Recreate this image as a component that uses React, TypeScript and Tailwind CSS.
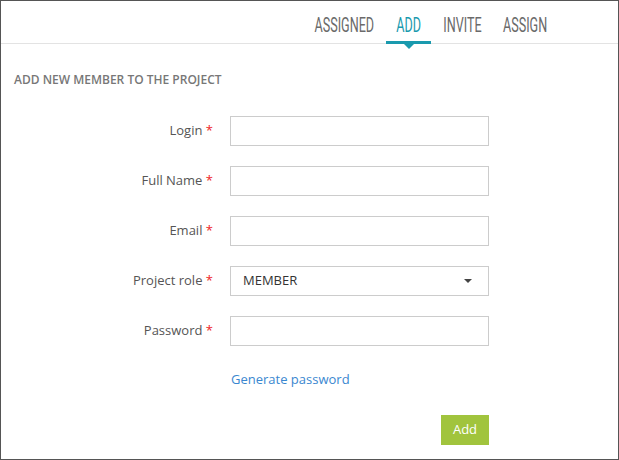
import React from 'react';

const tabs = [
  { label: 'ASSIGNED', w: 'w-[79px]' },
  { label: 'ADD', w: 'w-[45px]' },
  { label: 'INVITE', w: 'w-[58px]' },
  { label: 'ASSIGN', w: 'w-[64px]' },
];

const fields = [
  { label: 'Login', type: 'text' },
  { label: 'Full Name', type: 'text' },
  { label: 'Email', type: 'text' },
  { label: 'Project role', type: 'select' },
  { label: 'Password', type: 'password' },
];

const App = () => {
  return (
    <div className="w-[619px] h-[460px] bg-white border border-[#555] font-['Open_Sans',sans-serif] flex flex-col">
      {/* tab bar */}
      <div className="h-[43px] border-b border-[#e3e3e3] flex justify-end items-stretch pr-[61px] gap-[2px] shrink-0">
        {tabs.map((t) => {
          const active = t.label === 'ADD';
          return (
            <div
              key={t.label}
              className={`relative flex items-center justify-center pt-[5px] ${t.w} text-[20px] font-['Roboto',sans-serif] ${
                active ? 'text-[#1a9aae]' : 'text-[#6a6a6a]'
              }`}
            >
              <span className="inline-block scale-x-[0.63] whitespace-nowrap">{t.label}</span>
              {active && (
                <>
                  <div className="absolute left-0 right-0 -bottom-[1px] h-[3px] bg-[#1a9aae]" />
                  <div className="absolute left-1/2 -translate-x-1/2 -bottom-[6px] w-0 h-0 border-l-[5px] border-r-[5px] border-t-[5px] border-l-transparent border-r-transparent border-t-[#1a9aae]" />
                </>
              )}
            </div>
          );
        })}
      </div>

      <div className="px-[13px] pt-[29px] text-[12px] font-semibold text-[#777] leading-[14px]">
        ADD NEW MEMBER TO THE PROJECT
      </div>

      <div className="flex flex-col gap-[20px] mt-[29px]">
        {fields.map((f) => (
          <div key={f.label} className="flex items-center">
            <div className="w-[213px] text-right text-[13px] text-[#555] pr-[1px]">
              {f.label} <span className="text-[#ee1c25]">*</span>
            </div>
            <div className="ml-[16px] w-[259px] h-[30px] border border-[#ccc] flex items-center px-[12px] text-[13px] text-[#333]">
              {f.type === 'select' && (
                <>
                  <span className="flex-1">MEMBER</span>
                  <span className="w-0 h-0 border-l-[4px] border-r-[4px] border-t-[4px] border-l-transparent border-r-transparent border-t-[#444] mr-[4px]" />
                </>
              )}
            </div>
          </div>
        ))}
      </div>

      <div className="pl-[230px] mt-[24px] text-[13px] text-[#3a87d0]">Generate password</div>

      <div className="flex mt-[25px] pl-[440px]">
        <button className="w-[48px] h-[30px] bg-[#a1c43d] text-white text-[13px]">Add</button>
      </div>
    </div>
  );
};

export default App;
